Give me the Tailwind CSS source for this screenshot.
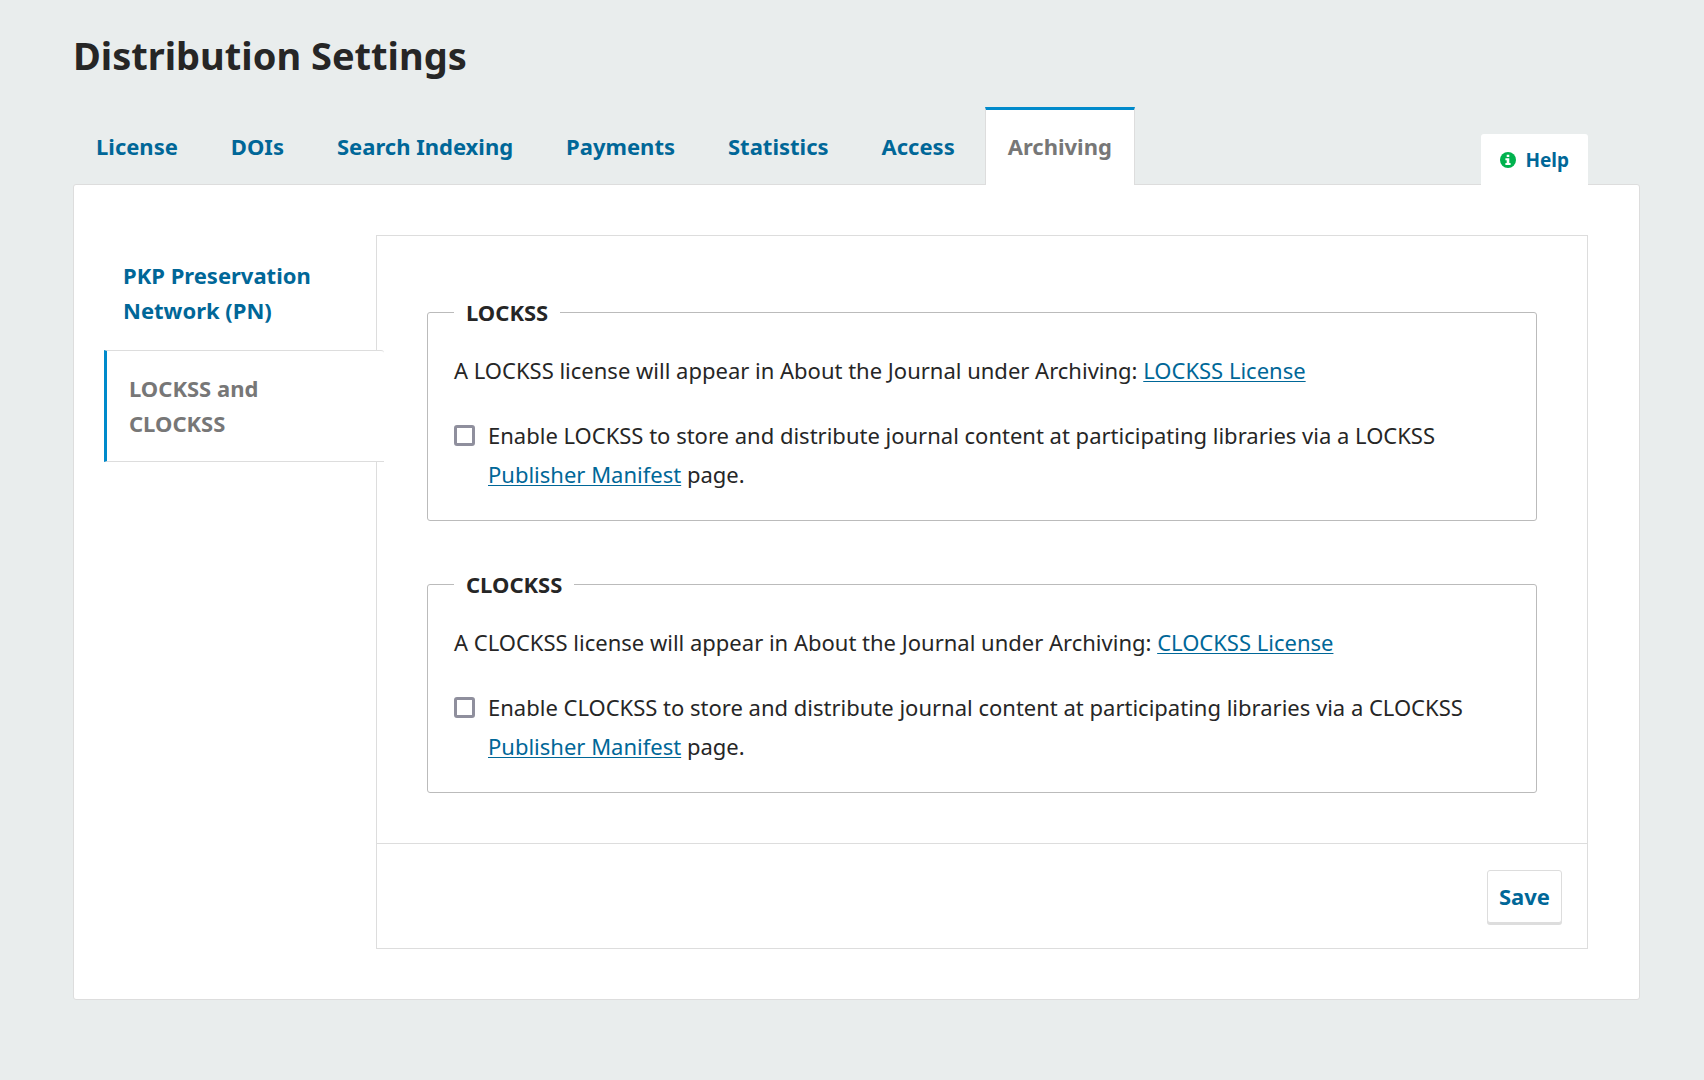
<!DOCTYPE html>
<html lang="en">
<head>
<meta charset="utf-8">
<meta name="viewport" content="width=device-width, initial-scale=1">
<title>Distribution Settings</title>
<script src="https://cdn.jsdelivr.net/npm/@tailwindcss/browser@4"></script>
</head>
<body class="min-h-screen bg-[#e9eded] pt-[31px] pr-16 pb-20 pl-[73px] font-['Noto_Sans',sans-serif] text-[22px] leading-[39px] text-[#262626]">
<header>
  <h1 class="text-[38px] leading-[48px] font-bold">Distribution Settings</h1>
</header>
<main class="mt-7">
  <div class="flex items-end justify-between pr-[52px]">
    <nav aria-label="Settings sections" class="flex gap-[7px] font-bold leading-[35px] text-[#006798]">
      <a href="#license" class="border-x border-t-3 border-transparent px-[22px] pt-[19px] pb-5">License</a>
      <a href="#dois" class="border-x border-t-3 border-transparent px-[22px] pt-[19px] pb-5">DOIs</a>
      <a href="#indexing" class="border-x border-t-3 border-transparent px-[22px] pt-[19px] pb-5">Search Indexing</a>
      <a href="#payments" class="border-x border-t-3 border-transparent px-[22px] pt-[19px] pb-5">Payments</a>
      <a href="#statistics" class="border-x border-t-3 border-transparent px-[22px] pt-[19px] pb-5">Statistics</a>
      <a href="#access" class="border-x border-t-3 border-transparent px-[22px] pt-[19px] pb-5">Access</a>
      <a href="#archiving" aria-current="page" class="relative z-10 -mb-px border-x border-t-3 border-x-[#ddd] border-t-[#008acb] bg-white px-[22px] pt-[19px] pb-[21px] text-[#777]">Archiving</a>
    </nav>
    <button type="button" class="relative z-10 -mb-px flex items-center gap-[9px] rounded-t-[3px] bg-white px-[19px] pt-[9px] pb-2 text-[19px] leading-[34px] font-bold text-[#006798]">
      <svg class="size-4" viewBox="0 0 16 16" aria-hidden="true"><circle cx="8" cy="8" r="8" fill="#00b24e"/><path fill="#fff" d="M6.7 2.7h2.6v2.2H6.7zM5.4 6.3h3.9v4.8h1.3v2H5.4v-2h1.3V8.3H5.4z"/></svg>
      Help
    </button>
  </div>
  <div class="flex items-start rounded-[3px] border border-[#ddd] bg-white pt-[50px] pr-[51px] pb-[50px] pl-[30px]">
    <nav aria-label="Archiving sections" class="relative z-10 -mr-2 w-[280px] shrink-0 pt-[3px] leading-[35px] font-bold">
      <a href="#pn" class="block pt-5 pr-10 pb-[22px] pl-[19px] text-[#006798]">PKP Preservation Network (PN)</a>
      <a href="#lockss" aria-current="page" class="block rounded-tr-[3px] border-y border-l-3 border-y-[#ddd] border-l-[#008acb] bg-white py-5 pr-24 pl-[22px] text-[#777]">LOCKSS and CLOCKSS</a>
    </nav>
    <form class="min-w-0 flex-1 border border-[#ddd]">
      <div class="flex flex-col gap-[44px] px-[50px] pt-[57px] pb-[50px]">
        <fieldset class="rounded-[3px] border border-[#bbb] px-[26px] pb-[26px]">
          <legend class="px-3 font-bold">LOCKSS</legend>
          <p class="mt-[19px]">A LOCKSS license will appear in About the Journal under Archiving: <a href="#lockss-license" class="text-[#006798] underline decoration-1 underline-offset-2">LOCKSS License</a></p>
          <div class="mt-[26px] flex items-start gap-[13px]">
            <input id="enable-lockss" type="checkbox" class="mt-[9px] size-[21px] shrink-0 appearance-none rounded-[3px] border-3 border-[#8f8f9d] bg-white checked:bg-[#006798]">
            <label for="enable-lockss">Enable LOCKSS to store and distribute journal content at participating libraries via a LOCKSS <a href="#lockss-manifest" class="text-[#006798] underline decoration-1 underline-offset-2">Publisher Manifest</a> page.</label>
          </div>
        </fieldset>
        <fieldset class="rounded-[3px] border border-[#bbb] px-[26px] pb-[26px]">
          <legend class="px-3 font-bold">CLOCKSS</legend>
          <p class="mt-[19px]">A CLOCKSS license will appear in About the Journal under Archiving: <a href="#clockss-license" class="text-[#006798] underline decoration-1 underline-offset-2">CLOCKSS License</a></p>
          <div class="mt-[26px] flex items-start gap-[13px]">
            <input id="enable-clockss" type="checkbox" class="mt-[9px] size-[21px] shrink-0 appearance-none rounded-[3px] border-3 border-[#8f8f9d] bg-white checked:bg-[#006798]">
            <label for="enable-clockss">Enable CLOCKSS to store and distribute journal content at participating libraries via a CLOCKSS <a href="#clockss-manifest" class="text-[#006798] underline decoration-1 underline-offset-2">Publisher Manifest</a> page.</label>
          </div>
        </fieldset>
      </div>
      <div class="flex justify-end border-t border-[#ddd] px-[25px] pt-[26px] pb-[25px]">
        <button type="submit" class="rounded-[3px] border border-[#ddd] bg-white px-[11px] py-[6px] font-bold text-[#006798] shadow-[0_2px_0_#ddd]">Save</button>
      </div>
    </form>
  </div>
</main>
</body>
</html>
